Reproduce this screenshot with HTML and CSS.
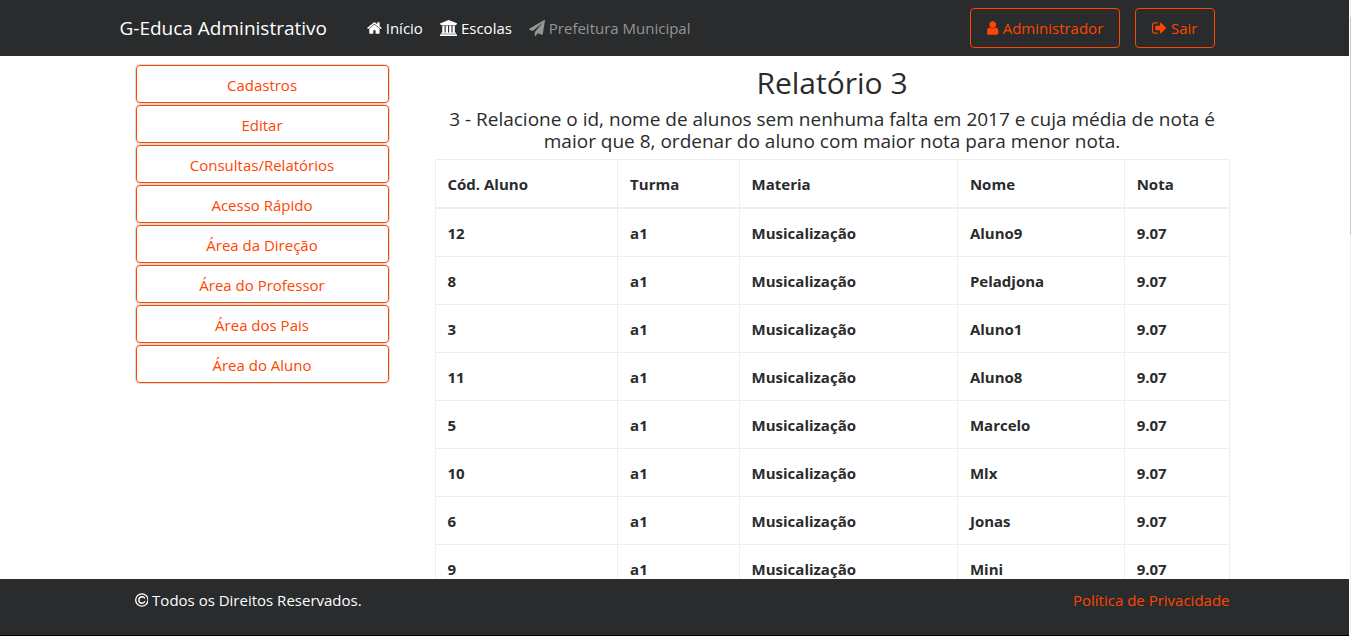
FILE: index.html
```html
<!DOCTYPE html>
<html lang="pt-BR">
<head>
<meta charset="utf-8">
<meta name="viewport" content="width=device-width, initial-scale=1">
<title>G-Educa Administrativo</title>
<link rel="stylesheet" href="styles.css">
</head>
<body>
<div class="page">
<header class="topbar">
  <div class="container topbar-inner">
    <a class="brand" href="#">G-Educa Administrativo</a>
    <nav class="nav">
      <a class="nav-link" href="#"><svg class="icon" viewBox="0 0 1664 1792"><path d="M1408 992v480q0 26-19 45t-45 19H960v-384H704v384H320q-26 0-45-19t-19-45V992q0-1 .5-3t.5-3l575-474 575 474q1 2 1 6zm223-69l-62 74q-8 9-21 11h-3q-13 0-21-7L832 424 140 1001q-12 8-24 7-13-2-21-11l-62-74q-8-10-7-23.500T37 878l719-599q32-26 76-26t76 26l244 204V288q0-14 9-23t23-9h192q14 0 23 9t9 23v408l219 182q10 8 11 21.500t-7 23.500z"/></svg> Início</a>
      <a class="nav-link" href="#"><svg class="icon" viewBox="0 0 1920 1792"><path d="M960 0l960 384v128h-128q0 26-20.500 45t-48.500 19h-1526q-28 0-48.500-19t-20.500-45h-128v-128zm-704 640h256v768h128v-768h256v768h128v-768h256v768h128v-768h256v768h59q28 0 48.500 19t20.500 45v64h-1664v-64q0-26 20.500-45t48.500-19h59v-768zm1595 960q28 0 48.500 19t20.500 45v128h-1920v-128q0-26 20.500-45t48.500-19h1782z"/></svg> Escolas</a>
      <a class="nav-link muted" href="#"><svg class="icon" viewBox="0 0 1792 1792"><path d="M1764 11q33 24 27 64l-256 1536q-5 29-32 45-14 8-31 8-11 0-24-5l-453-185-242 295q-18 23-49 23-13 0-22-4-19-7-30.500-23.500t-11.500-36.500v-349l864-1059-1069 925-395-162q-37-14-40-55-2-40 32-59l1664-960q15-9 32-9 20 0 36 11z"/></svg> Prefeitura Municipal</a>
    </nav>
    <div class="account">
      <button class="btn" type="button"><svg class="icon" viewBox="0 0 1280 1792"><path d="M1280 1399q0 109-62.500 187t-150.500 78h-854q-88 0-150.500-78t-62.500-187q0-85 8.500-160.500t31.500-152 58.500-131 94-89 134.500-34.500q131 128 313 128t313-128q76 0 134.500 34.500t94 89 58.500 131 31.500 152 8.500 160.500zm-256-887q0 159-112.500 271.500t-271.500 112.500-271.500-112.500-112.500-271.500 112.500-271.500 271.500-112.500 271.500 112.500 112.500 271.500z"/></svg> Administrador</button>
      <button class="btn" type="button"><svg class="icon" viewBox="0 0 1664 1792"><path d="M640 1440q0 4 1 20t.5 26.500-3 23.500-10 19.500-20.500 6.500h-320q-119 0-203.500-84.500t-84.500-203.500v-704q0-119 84.500-203.500t203.500-84.500h320q13 0 22.500 9.500t9.500 22.500q0 4 1 20t.5 26.500-3 23.500-10 19.500-20.500 6.500h-320q-66 0-113 47t-47 113v704q0 66 47 113t113 47h312l11.500 1 11.500 3 8 5.500 7 9 2 13.500zm928-544q0 26-19 45l-544 544q-19 19-45 19t-45-19-19-45v-288h-448q-26 0-45-19t-19-45v-384q0-26 19-45t45-19h448v-288q0-26 19-45t45-19 45 19l544 544q19 19 19 45z"/></svg> Sair</button>
    </div>
  </div>
</header>

<main class="content">
  <div class="container columns">
    <nav class="menu" aria-label="Menu">
      <a class="menu-item" href="#">Cadastros</a>
      <a class="menu-item" href="#">Editar</a>
      <a class="menu-item" href="#">Consultas/Relatórios</a>
      <a class="menu-item" href="#">Acesso Rápido</a>
      <a class="menu-item" href="#">Área da Direção</a>
      <a class="menu-item" href="#">Área do Professor</a>
      <a class="menu-item" href="#">Área dos Pais</a>
      <a class="menu-item" href="#">Área do Aluno</a>
    </nav>
    <section class="report">
      <h1 class="report-title">Relatório 3</h1>
      <h2 class="report-text">3 - Relacione o id, nome de alunos sem nenhuma falta em 2017 e cuja média de nota é maior que 8, ordenar do aluno com maior nota para menor nota.</h2>
      <table class="table">
        <colgroup><col class="col-id"><col class="col-class"><col class="col-subject"><col class="col-name"><col class="col-grade"></colgroup>
        <thead>
          <tr><th>Cód. Aluno</th><th>Turma</th><th>Materia</th><th>Nome</th><th>Nota</th></tr>
        </thead>
        <tbody>
          <tr><td>12</td><td>a1</td><td>Musicalização</td><td>Aluno9</td><td>9.07</td></tr>
          <tr><td>8</td><td>a1</td><td>Musicalização</td><td>Peladjona</td><td>9.07</td></tr>
          <tr><td>3</td><td>a1</td><td>Musicalização</td><td>Aluno1</td><td>9.07</td></tr>
          <tr><td>11</td><td>a1</td><td>Musicalização</td><td>Aluno8</td><td>9.07</td></tr>
          <tr><td>5</td><td>a1</td><td>Musicalização</td><td>Marcelo</td><td>9.07</td></tr>
          <tr><td>10</td><td>a1</td><td>Musicalização</td><td>Mlx</td><td>9.07</td></tr>
          <tr><td>6</td><td>a1</td><td>Musicalização</td><td>Jonas</td><td>9.07</td></tr>
          <tr><td>9</td><td>a1</td><td>Musicalização</td><td>Mini</td><td>9.07</td></tr>
        </tbody>
      </table>
    </section>
  </div>
</main>

<footer class="footer">
  <div class="container footer-inner">
    <span><svg class="icon" viewBox="0 0 1536 1792"><g fill="none" stroke="currentColor" stroke-width="150"><circle cx="768" cy="896" r="690"/><path d="M1110 735Q1010 530 785 530Q440 550 430 896Q440 1250 785 1265Q1030 1260 1115 1050"/></g></svg> Todos os Direitos Reservados.</span>
    <a class="footer-link" href="#">Política de Privacidade</a>
  </div>
</footer>
</div>
</body>
</html>
```
FILE: styles.css
```css
* { box-sizing: border-box; }

body {
  margin: 0;
  font-family: "Open Sans", "Noto Sans", sans-serif;
  font-size: 15px;
  line-height: 24px;
  color: #292b2c;
  background: #fff;
}

a { color: inherit; text-decoration: none; }

/* The right edge carries a slim scroll track with its thumb. */
.page {
  display: flex;
  flex-direction: column;
  height: 100vh;
  padding-right: 2px;
  background:
    linear-gradient(#c8c8c8, #c8c8c8) right 17px / 1px 218px no-repeat,
    linear-gradient(#f1f1f1, #f1f1f1) right top / 1px 100% no-repeat;
}

.container {
  width: 100%;
  max-width: 1140px;
  margin: 0 auto;
  padding: 0 15px;
}

.icon {
  height: 16px;
  fill: currentColor;
  vertical-align: -2px;
}

.topbar {
  flex: none;
  padding: 8px 0;
  background: #292b2c;
  color: #fff;
}

.topbar-inner { display: flex; align-items: center; }

.brand { margin-right: 40px; font-size: 19px; }

.nav { display: flex; gap: 17px; }

.nav-link { white-space: nowrap; }

.muted { color: #949595; }

.account {
  display: flex;
  gap: 15px;
  margin-left: auto;
  padding-right: 15px;
}

.btn {
  padding: 7px 16px;
  font: inherit;
  color: #ff4500;
  background: none;
  border: 1px solid #ff4500;
  border-radius: 4px;
  white-space: nowrap;
}

.content {
  flex: 1;
  min-height: 0;
  overflow: hidden;
}

.columns {
  display: grid;
  grid-template-columns: 17fr 53fr;
  gap: 45px;
  align-items: start;
  padding: 8px 15px 8px 30px;
}

.menu {
  display: flex;
  flex-direction: column;
  gap: 2px;
  padding: 1px;
}

.menu-item {
  padding: 7px 12px 5px;
  border: 1px solid #ff4500;
  border-radius: 4px;
  box-shadow: 0 0 0 1px #ddd;
  color: #ff4500;
  text-align: center;
}

.report { text-align: center; }

.report-title {
  margin: 0 0 6px;
  font-size: 30px;
  font-weight: 400;
  line-height: 38px;
}

.report-text {
  margin: 0 0 7px;
  font-size: 19px;
  font-weight: 400;
  line-height: 22px;
}

.table {
  width: 100%;
  table-layout: fixed;
  border-collapse: collapse;
  text-align: left;
}

.table th,
.table td {
  padding: 12px 12px 11px;
  border: 1px solid #eceeef;
  font-weight: 700;
}

.table th { border-bottom-width: 2px; }

.col-id { width: 23%; }
.col-class { width: 15.3%; }
.col-subject { width: 27.5%; }
.col-name { width: 21%; }
.col-grade { width: 13.2%; }

.footer {
  flex: none;
  padding: 9px 0 23px;
  border-bottom: 1px solid #000;
  background: #292b2c;
  color: #fff;
}

.footer-inner {
  display: flex;
  justify-content: space-between;
  padding: 0 15px 0 30px;
}

.footer-link { color: #ff4500; }
```
